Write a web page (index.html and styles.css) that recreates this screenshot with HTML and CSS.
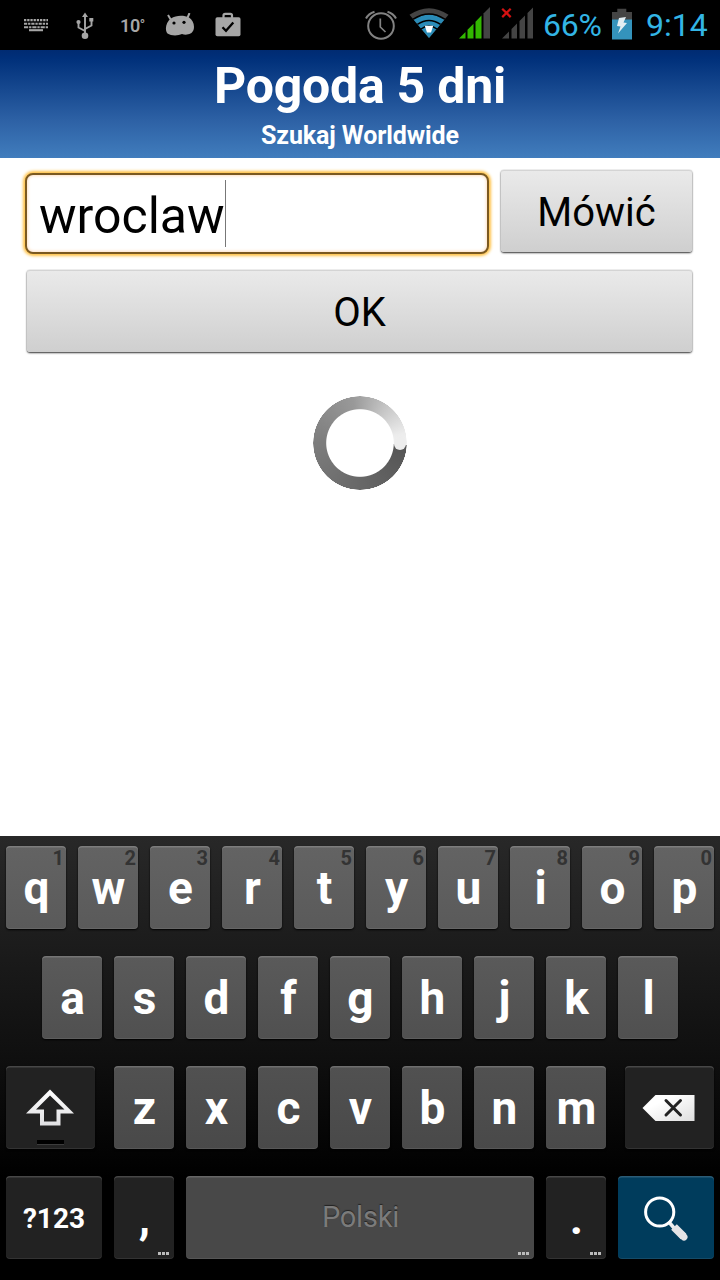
FILE: index.html
```
<!DOCTYPE html>
<html lang="pl">
<head>
<meta charset="utf-8">
<title>Pogoda 5 dni</title>
<link rel="stylesheet" href="styles.css">
</head>
<body>
<div class="screen">
  <div class="status">
    <div class="notifications">
      <svg class="ic-keyboard" width="26" height="14" viewBox="0 0 26 14" fill="none" stroke="#a6a6a6" stroke-width="2.1">
        <path d="M1 2.1H25" stroke-dasharray="2.3 .9"/>
        <path d="M1 5.7H25" stroke-dasharray="3.2 .9 2.3 .9"/>
        <path d="M1 9.2H25" stroke-dasharray="4.2 .9 2.3 .9"/>
        <path d="M6 12.2H20"/>
      </svg>
      <svg class="ic-usb" width="20" height="28" viewBox="0 0 20 28" fill="none" stroke="#a6a6a6" stroke-width="1.9">
        <path d="M10 24V4M10 19L3.5 15.5V10M10 17L16.5 13.5V7"/>
        <path d="M10 .5L13 5H7ZM14.3 6h4v3.6h-4Z" fill="#a6a6a6" stroke="none"/>
        <circle cx="3.5" cy="10" r="2.1" fill="#a6a6a6" stroke="none"/>
        <circle cx="10" cy="23.8" r="3.3" fill="#a6a6a6" stroke="none"/>
      </svg>
      <span class="temp">10<span class="degree">°</span></span>
      <svg class="ic-droid" width="30" height="24" viewBox="0 0 30 24">
        <path d="M3 2L6 7M24.5 0L22 6" stroke="#a6a6a6" stroke-width="2"/>
        <path d="M6 5.5C11 2 19 2 24 4.5C28 7 30 12 28.5 17C27 21.5 21 22.5 17 21C13 23 6 23 2.5 20.5C-.5 17 .8 9 6 5.5Z" fill="#a6a6a6"/>
        <circle cx="9" cy="10" r="1.6"/><circle cx="19" cy="9.3" r="1.6"/>
      </svg>
      <svg class="ic-bag" width="26" height="26" viewBox="0 0 26 26">
        <path d="M8.5 6V3.5Q8.5 1.8 10.2 1.8H15.3Q17 1.8 17 3.5V6" fill="none" stroke="#a6a6a6" stroke-width="2.2"/>
        <rect x=".5" y="5.3" width="25" height="19" rx="1.8" fill="#a6a6a6"/>
        <path d="M7.5 15.2L11 18.8L18.3 10.5" fill="none" stroke="#000" stroke-width="2.3"/>
      </svg>
    </div>
    <div class="system">
      <svg class="ic-alarm" width="32" height="32" viewBox="0 0 32 32" fill="none" stroke="#828282">
        <circle cx="16" cy="17" r="12.8" stroke-width="2"/>
        <path d="M15.3 9.5V18L20.5 23" stroke-width="1.7"/>
        <path d="M1 9.5Q3.5 4.5 9.5 2.7M22.5 2.7Q28.5 4.5 31 9.5" stroke-width="2"/>
      </svg>
      <svg class="ic-wifi" width="40" height="32" viewBox="0 0 40 32">
        <path d="M.5 7.8Q20 -5.5 39.5 7.8L20 31Z" fill="#444"/>
        <path d="M4.7 12.8Q20 2.5 35.3 12.8L20 31Z" fill="#2a8cb8"/>
        <path d="M4.2 12.2Q20 1.6 35.8 12.2M8.4 17.4Q20 9.4 31.6 17.4M12 22Q20 16 28 22" fill="none" stroke="#000" stroke-width="1.5"/>
        <path d="M15.8 18.8H24.2L22 25.5H18Z" fill="#fff"/>
      </svg>
      <svg class="ic-signal" width="33" height="32" viewBox="0 0 33 32">
        <path d="M1 31.5L7.5 25V31.5ZM9.5 31.5V22.8L15.5 16.8V31.5ZM17.5 31.5V14.8L23.5 8.5V31.5Z" fill="#32b800"/>
        <path d="M25.5 31.5V6.5L32 0V31.5Z" fill="#444"/>
      </svg>
      <svg class="ic-nosignal" width="33" height="36" viewBox="0 0 33 36">
        <path d="M1 35.5L8 28.5V35.5ZM10.5 35.5V26L16 20.5V35.5ZM18.5 35.5V18L24 12.5V35.5ZM26.5 35.5V10L32 4.5V35.5Z" fill="#444"/>
        <path d="M1.2 5.7L9.7 14.1M9.7 5.7L1.2 14.1" stroke="#d51111" stroke-width="2.2"/>
      </svg>
      <span class="percent">66%</span>
      <svg class="ic-battery" width="20" height="32" viewBox="0 0 20 32">
        <path d="M0 4H5.3V.8H14.3V4H20V12H0Z" fill="#444"/>
        <path d="M0 11.5H20V31.5H0Z" fill="#3493bc"/>
        <path d="M7 10L14 9L11.5 14.5L15 15L6 25.5L8.5 18.5L5 18Z" fill="#e2eef3"/>
      </svg>
      <span class="clock">9:14</span>
    </div>
  </div>

  <header class="header">
    <h1 class="title">Pogoda 5 dni</h1>
    <p class="subtitle">Szukaj Worldwide</p>
  </header>

  <main class="content">
    <div class="search">
      <div class="field"><span class="query">wroclaw</span><span class="caret"></span></div>
      <button class="button speak">Mówić</button>
    </div>
    <button class="button ok">OK</button>
    <div class="spinner"></div>
  </main>

  <section class="keyboard">
    <div class="row">
      <div class="key">q<small class="hint">1</small></div>
      <div class="key">w<small class="hint">2</small></div>
      <div class="key">e<small class="hint">3</small></div>
      <div class="key">r<small class="hint">4</small></div>
      <div class="key">t<small class="hint">5</small></div>
      <div class="key">y<small class="hint">6</small></div>
      <div class="key">u<small class="hint">7</small></div>
      <div class="key">i<small class="hint">8</small></div>
      <div class="key">o<small class="hint">9</small></div>
      <div class="key">p<small class="hint">0</small></div>
    </div>
    <div class="row">
      <div class="key tone2">a</div>
      <div class="key tone2">s</div>
      <div class="key tone2">d</div>
      <div class="key tone2">f</div>
      <div class="key tone2">g</div>
      <div class="key tone2">h</div>
      <div class="key tone2">j</div>
      <div class="key tone2">k</div>
      <div class="key tone2">l</div>
    </div>
    <div class="row">
      <div class="key dark shift">
        <svg width="50" height="40" viewBox="0 0 50 40">
          <defs><linearGradient id="shade" x1="0" y1="0" x2="0" y2="1"><stop offset="0" stop-color="#fff"/><stop offset="1" stop-color="#e0e0e2"/></linearGradient></defs>
          <path fill-rule="evenodd" fill="url(#shade)" d="M25 1.5L49 25.5H35.5V37.5H15V25.5H1ZM25 7.5L11 21.5H19V33.5H31.5V21.5H39.5Z"/>
        </svg>
        <span class="lock"></span>
      </div>
      <div class="key tone3">z</div>
      <div class="key tone3">x</div>
      <div class="key tone3">c</div>
      <div class="key tone3">v</div>
      <div class="key tone3">b</div>
      <div class="key tone3">n</div>
      <div class="key tone3">m</div>
      <div class="key dark delete">
        <svg width="53" height="28" viewBox="0 0 53 28">
          <defs><linearGradient id="sheen" x1="0" y1="0" x2="1" y2="1"><stop offset=".3" stop-color="#fff"/><stop offset="1" stop-color="#dedede"/></linearGradient></defs>
          <path d="M.5 14L13.5 1H52.5V27H13.5Z" fill="url(#sheen)"/>
          <path d="M24 6.5L38.5 21M38.5 6.5L24 21" stroke="#222" stroke-width="3" stroke-linecap="round"/>
        </svg>
      </div>
    </div>
    <div class="row">
      <div class="key dark symbols">?123</div>
      <div class="key dark">,<span class="more"></span></div>
      <div class="key space">Polski<span class="more"></span></div>
      <div class="key dark">.<span class="more"></span></div>
      <div class="key enter">
        <svg width="46" height="46" viewBox="0 0 46 46">
          <path d="M25.5 26.5L31 33" stroke="#eee" stroke-width="3.5"/>
          <circle cx="16.7" cy="17" r="14.1" fill="none" stroke="#fff" stroke-width="3"/>
          <path d="M31 32L40.5 41.5" stroke="#e4e4e6" stroke-width="8"/>
          <path d="M39 40L41 42" stroke="#e4e4e6" stroke-width="7" stroke-linecap="round"/>
        </svg>
      </div>
    </div>
  </section>
</div>
</body>
</html>
```
FILE: styles.css
```
* { box-sizing: border-box; }
body { margin: 0; background: #fff; font-family: Roboto, "Noto Sans", sans-serif; }
.screen { width: 720px; height: 1280px; display: flex; flex-direction: column; overflow: hidden; }

.status { height: 50px; background: #000; display: flex; justify-content: space-between; }
.notifications, .system { display: flex; align-items: flex-start; }
.notifications { padding-left: 23px; }
.system { padding-right: 12px; }
.status svg { display: block; flex: none; }
.ic-keyboard { margin: 18px 29px 0 0; }
.ic-usb { margin: 12px 25px 0 -3px; }
.temp { width: 25px; font-size: 18px; font-weight: 600; letter-spacing: -.4px; line-height: 51px; color: #a6a6a6; white-space: nowrap; }
.degree { font-size: 14px; vertical-align: 2px; line-height: 1; }
.ic-droid { margin: 13px 20px 0 20px; }
.ic-bag { margin: 12px 0 0; }
.ic-alarm { margin: 9px 12px 0 0; }
.ic-wifi { margin: 7px 9px 0 0; }
.ic-signal { margin: 6.5px 10px 0 0; }
.ic-nosignal { margin: 3px 9px 0 0; }
.percent, .clock { font-size: 32px; line-height: 51px; color: #33b5e5; white-space: nowrap; }
.percent { width: 60px; letter-spacing: -.2px; }
.ic-battery { margin: 8px 14px 0 9px; }
.clock { width: 62px; }

.header { height: 108px; text-align: center; color: #fff; background: linear-gradient(#002b72 0%, #00307a 8%, #2d61a5 65%, #417dbd 100%); }
.title { margin: 0; font-size: 50px; font-weight: 700; line-height: 72px; letter-spacing: -.25px; }
.subtitle { margin: 0; font-size: 25px; font-weight: 700; line-height: 28px; letter-spacing: -.1px; }

.content { height: 678px; display: flex; flex-direction: column; padding: 12px 27px 0; background: #fff; }
.search { display: flex; justify-content: space-between; margin: 0 1px 0 -2px; }
.field { width: 464px; height: 81px; margin-top: 3px; padding: 5px 0 0 12px; display: flex; border: 2px solid #7b5920; border-radius: 8px; background: #fff; box-shadow: 0 0 3px 2px #ffc247, inset 0 0 3px 1px #ffe0c4; }
.query { font-size: 50px; line-height: 72px; color: #000; }
.caret { width: 1px; height: 67px; background: #777; }
.button { display: block; height: 82px; margin: 0; padding: 0; border: 0; border-radius: 3px; font: 40px/84px Roboto, "Noto Sans", sans-serif; color: #000; background: linear-gradient(#eaeaea, #dedede 45%, #cfcfcf); box-shadow: 0 1px 2px #333, 0 0 1px #aaa, inset 0 1px 0 #d4d4d4; }
.speak { width: 191px; padding-top: 1px; }
.ok { width: 665px; margin-top: 16px; padding-top: 1px; }
.spinner { position: relative; align-self: center; width: 94px; height: 94px; margin-top: 44px; }
.spinner::before { content: ""; position: absolute; inset: 0; border-radius: 50%; background: conic-gradient(from 92deg, #555, #686868 25%, #7d7d7d 50%, #999 72%, #c4c4c4 84%, #ececec 96%, #f0f0f0); mask: radial-gradient(circle, transparent 33.3px, #000 34.3px, #000 46.5px, transparent 47px); }
.spinner::after { content: ""; position: absolute; right: 1px; top: 41px; width: 12px; height: 13px; border-radius: 6px; background: #ededed; }

.keyboard { height: 444px; padding-top: 10px; background: linear-gradient(#282828, #101010 48%, #000 77%); display: flex; flex-direction: column; gap: 27px; }
.row { display: flex; justify-content: center; gap: 12px; }
.key { position: relative; width: 60px; height: 83px; border-radius: 4px; text-align: center; text-indent: 1px; font-size: 46px; font-weight: 700; line-height: 85px; color: #fff; background: linear-gradient(#636363, #5a5a5a); box-shadow: 0 1px 2px #000, inset 0 1.5px 0 rgba(255,255,255,.17), inset 0 -1px 0 rgba(255,255,255,.08); }
.tone2 { background: linear-gradient(#5a5a5a, #505050); }
.tone3 { background: linear-gradient(#515151, #494949); }
.hint { position: absolute; top: 0; right: 2px; text-indent: 0; font-size: 20px; line-height: 24px; color: #333; }
.dark { background: #222; }
.shift, .delete { width: 89px; display: flex; align-items: center; justify-content: center; }
.shift { margin-right: 7px; }
.shift svg { margin-left: -1px; }
.delete { margin-left: 7px; }
.delete svg { margin-left: -2px; }
.lock { position: absolute; left: 31px; bottom: 4px; width: 27px; height: 5px; background: #000; border-bottom: 1px solid #3c3c3c; }
.symbols { width: 96px; font-size: 28px; text-indent: 0; }
.space { width: 348px; font-size: 29px; font-weight: 400; letter-spacing: -.2px; line-height: 83px; color: #7b7b7b; background: #484848; text-shadow: 0 -1px 1px #222; }
.enter { width: 96px; background: #003c5c; display: flex; align-items: center; justify-content: center; }
.more { position: absolute; right: 4px; bottom: 4px; width: 12px; height: 3px; background: repeating-linear-gradient(90deg, #bbb 0 3px, transparent 3px 4px); }
```
